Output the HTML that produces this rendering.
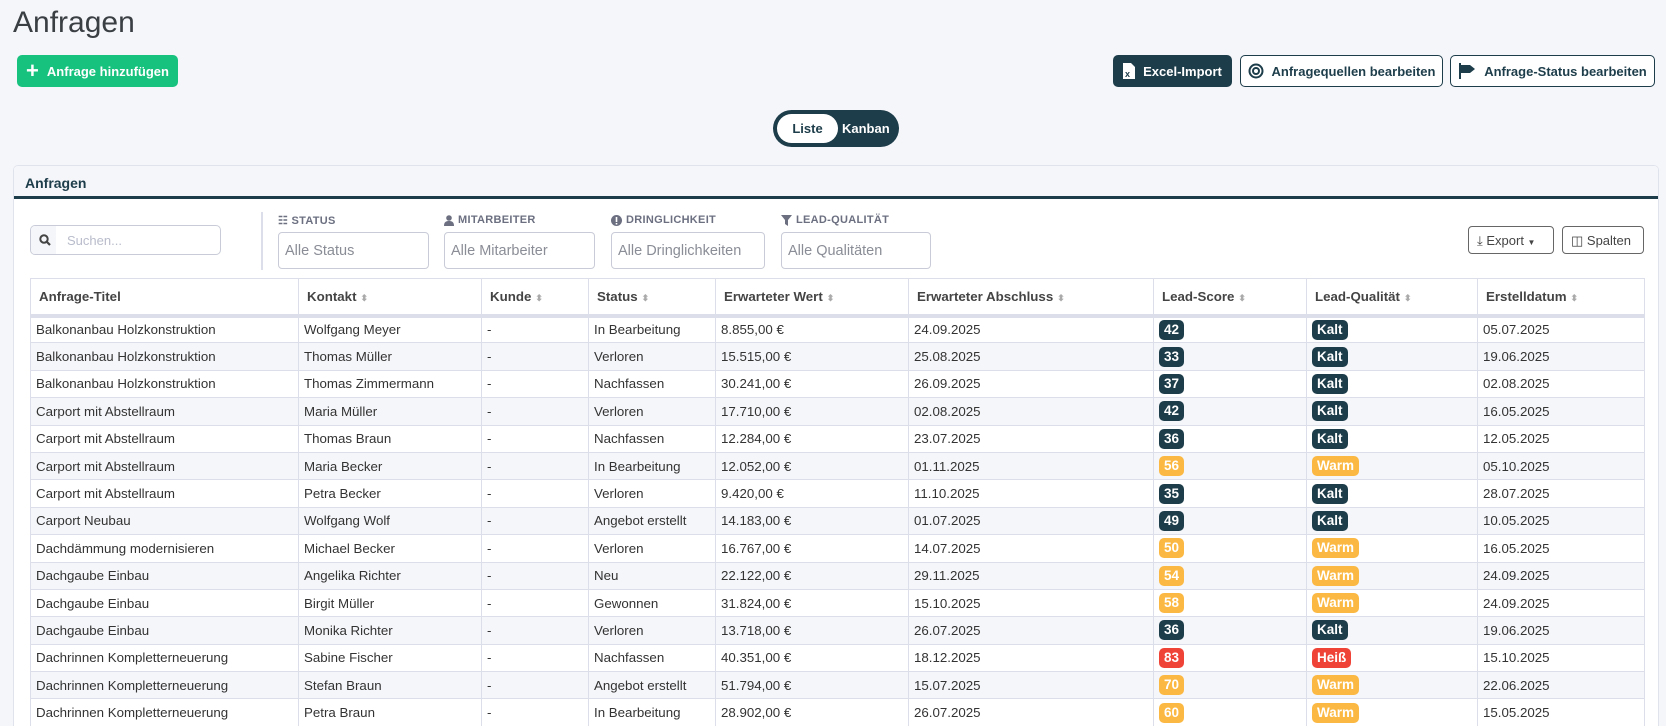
<!DOCTYPE html>
<html style="height:726px;overflow:hidden"><head><meta charset="utf-8"><style>
*{box-sizing:border-box;margin:0;padding:0}
body{width:1666px;height:726px;overflow:hidden;background:#f5f6fa;font-family:"Liberation Sans",sans-serif;color:#333;position:relative}
.abs{position:absolute}
h1{position:absolute;left:13px;top:6px;font-size:30px;font-weight:400;color:#3a3f44}
.btn{position:absolute;display:flex;align-items:center;justify-content:center;gap:8px;font-size:13px;font-weight:bold;border-radius:5px;height:32px;top:55px}
.out{border:1.5px solid #1d3d4a;color:#1d3d4a;background:#fff}
.card{position:absolute;left:13px;top:165px;width:1646px;height:561px;background:#fff;border:1px solid #e1e3ec;border-bottom:none;border-radius:5px 5px 0 0;overflow:hidden}
.chead{height:33px;background:#f5f6fa;border-bottom:3px solid #1d3d4a;padding:9px 11px;font-weight:bold;font-size:14px;color:#1d3d4a}
.lbl{position:absolute;top:214px;font-size:11px;font-weight:bold;color:#6b6f80;letter-spacing:.3px;display:flex;align-items:center;gap:4px}
.inp{position:absolute;top:232px;height:37px;border:1px solid #c9ccd8;border-radius:4px;background:#fff;font-size:14.5px;color:#8a8d96;padding:10px 6px}
.tw{position:absolute;left:30px;top:278px;width:1620px;height:448px;overflow:hidden}
table{border-collapse:collapse;table-layout:fixed;font-size:13.3px}
th{height:37px;text-align:left;padding:0 8px;border:1px solid #dcdeea;border-bottom:4px solid #dcdeea;color:#444;font-size:13.3px;background:#fff}
th .s{color:#aaa;font-size:9px;margin-left:4px}
td{height:27.4px;padding:0 5px;border:1px solid #dcdeea;white-space:nowrap;overflow:hidden;color:#333}
tr:nth-child(odd) td{background:#f5f6fa}
tr:nth-child(even) td{background:#fff}
.b{display:inline-block;color:#fff;font-weight:bold;font-size:13.5px;padding:2px 5px;border-radius:5px;line-height:16px}
.k{background:#1d3d4a}.w{background:#fbb842}.h{background:#ef4338}
</style></head><body>
<h1>Anfragen</h1>
<div class="btn" style="left:17px;width:161px;background:#17c17e;color:#fff"><span style="font-size:22px;font-weight:bold;line-height:1">+</span>Anfrage hinzufügen</div>
<div class="btn" style="left:1113px;width:119px;background:#1d3d4a;color:#fff"><svg width="12" height="16" viewBox="0 0 12 16"><path d="M0 0h8l4 4v12H0z" fill="#fff"/><text x="2" y="14" font-size="9" fill="#1d3d4a" font-family="Liberation Sans">x</text></svg>Excel-Import</div>
<div class="btn out" style="left:1240px;width:203px"><svg width="16" height="16" viewBox="0 0 16 16"><circle cx="8" cy="8" r="6.5" fill="none" stroke="#1d3d4a" stroke-width="2"/><circle cx="8" cy="8" r="3" fill="none" stroke="#1d3d4a" stroke-width="2"/></svg>Anfragequellen bearbeiten</div>
<div class="btn out" style="left:1450px;width:205px"><svg width="18" height="16" viewBox="0 0 18 16"><rect x="1" y="0" width="2" height="16" fill="#1d3d4a"/><path d="M3 2h9l5 4-5 4H3z" fill="#1d3d4a"/></svg>Anfrage-Status bearbeiten</div>
<div class="abs" style="left:773px;top:110px;width:126px;height:37px;background:#1d3d4a;border-radius:19px"></div>
<div class="abs" style="left:777px;top:114px;width:61px;height:29px;background:#fff;border-radius:15px;font-size:13px;font-weight:bold;color:#1d3d4a;text-align:center;line-height:29px">Liste</div>
<div class="abs" style="left:842px;top:114px;font-size:13px;font-weight:bold;color:#fff;line-height:29px">Kanban</div>
<div class="card"><div class="chead">Anfragen</div></div>
<div class="abs" style="left:30px;top:225px;width:191px;height:30px;border:1px solid #c9ccd8;border-radius:5px;background:#fff;overflow:hidden"><div style="position:absolute;left:0;top:0;width:25px;height:28px;background:#f5f6fa"></div><svg class="abs" style="left:8px;top:8px" width="12" height="12" viewBox="0 0 12 12"><circle cx="5" cy="5" r="3.7" fill="none" stroke="#444" stroke-width="2"/><path d="M7.5 7.5l3.5 3.5" stroke="#444" stroke-width="2.2"/></svg><span class="abs" style="left:36px;top:7px;font-size:13px;color:#b9bccb">Suchen...</span></div>
<div class="abs" style="left:261px;top:212px;width:2px;height:58px;background:#dcdeea"></div>
<div class="lbl" style="left:278px">☷ STATUS</div>
<div class="lbl" style="left:444px"><svg width="10" height="11" viewBox="0 0 10 11"><circle cx="5" cy="3" r="2.8" fill="#6b6f80"/><path d="M0 11c0-4 2-5 5-5s5 1 5 5z" fill="#6b6f80"/></svg>MITARBEITER</div>
<div class="lbl" style="left:611px"><svg width="11" height="11"><circle cx="5.5" cy="5.5" r="5.5" fill="#6b6f80"/><rect x="4.7" y="2" width="1.6" height="5" fill="#fff"/><rect x="4.7" y="8" width="1.6" height="1.5" fill="#fff"/></svg>DRINGLICHKEIT</div>
<div class="lbl" style="left:781px"><svg width="11" height="11"><path d="M0 0h11L7 5v6L4 9V5z" fill="#6b6f80"/></svg>LEAD-QUALITÄT</div>
<div class="inp" style="left:278px;width:151px">Alle Status</div>
<div class="inp" style="left:444px;width:151px">Alle Mitarbeiter</div>
<div class="inp" style="left:611px;width:154px">Alle Dringlichkeiten</div>
<div class="inp" style="left:781px;width:150px">Alle Qualitäten</div>
<div class="abs" style="left:1468px;top:226px;width:86px;height:28px;border:1px solid #666;border-radius:4px;background:#fff;font-size:13px;color:#444;padding:6px 8px">⤓ Export <span style="font-size:8px">▼</span></div>
<div class="abs" style="left:1562px;top:226px;width:82px;height:28px;border:1px solid #666;border-radius:4px;background:#fff;font-size:13px;color:#444;padding:6px 8px">◫ Spalten</div>
<div class="tw"><table>
<colgroup><col style="width:268px"><col style="width:183px"><col style="width:107px"><col style="width:127px"><col style="width:193px"><col style="width:245px"><col style="width:153px"><col style="width:171px"><col style="width:167px"></colgroup>
<tr><th>Anfrage-Titel</th><th>Kontakt<span class="s">⬍</span></th><th>Kunde<span class="s">⬍</span></th><th>Status<span class="s">⬍</span></th><th>Erwarteter Wert<span class="s">⬍</span></th><th>Erwarteter Abschluss<span class="s">⬍</span></th><th>Lead-Score<span class="s">⬍</span></th><th>Lead-Qualität<span class="s">⬍</span></th><th>Erstelldatum<span class="s">⬍</span></th></tr>
<tr><td>Balkonanbau Holzkonstruktion</td><td>Wolfgang Meyer</td><td>-</td><td>In Bearbeitung</td><td>8.855,00 €</td><td>24.09.2025</td><td><span class="b k">42</span></td><td><span class="b k">Kalt</span></td><td>05.07.2025</td></tr>
<tr><td>Balkonanbau Holzkonstruktion</td><td>Thomas Müller</td><td>-</td><td>Verloren</td><td>15.515,00 €</td><td>25.08.2025</td><td><span class="b k">33</span></td><td><span class="b k">Kalt</span></td><td>19.06.2025</td></tr>
<tr><td>Balkonanbau Holzkonstruktion</td><td>Thomas Zimmermann</td><td>-</td><td>Nachfassen</td><td>30.241,00 €</td><td>26.09.2025</td><td><span class="b k">37</span></td><td><span class="b k">Kalt</span></td><td>02.08.2025</td></tr>
<tr><td>Carport mit Abstellraum</td><td>Maria Müller</td><td>-</td><td>Verloren</td><td>17.710,00 €</td><td>02.08.2025</td><td><span class="b k">42</span></td><td><span class="b k">Kalt</span></td><td>16.05.2025</td></tr>
<tr><td>Carport mit Abstellraum</td><td>Thomas Braun</td><td>-</td><td>Nachfassen</td><td>12.284,00 €</td><td>23.07.2025</td><td><span class="b k">36</span></td><td><span class="b k">Kalt</span></td><td>12.05.2025</td></tr>
<tr><td>Carport mit Abstellraum</td><td>Maria Becker</td><td>-</td><td>In Bearbeitung</td><td>12.052,00 €</td><td>01.11.2025</td><td><span class="b w">56</span></td><td><span class="b w">Warm</span></td><td>05.10.2025</td></tr>
<tr><td>Carport mit Abstellraum</td><td>Petra Becker</td><td>-</td><td>Verloren</td><td>9.420,00 €</td><td>11.10.2025</td><td><span class="b k">35</span></td><td><span class="b k">Kalt</span></td><td>28.07.2025</td></tr>
<tr><td>Carport Neubau</td><td>Wolfgang Wolf</td><td>-</td><td>Angebot erstellt</td><td>14.183,00 €</td><td>01.07.2025</td><td><span class="b k">49</span></td><td><span class="b k">Kalt</span></td><td>10.05.2025</td></tr>
<tr><td>Dachdämmung modernisieren</td><td>Michael Becker</td><td>-</td><td>Verloren</td><td>16.767,00 €</td><td>14.07.2025</td><td><span class="b w">50</span></td><td><span class="b w">Warm</span></td><td>16.05.2025</td></tr>
<tr><td>Dachgaube Einbau</td><td>Angelika Richter</td><td>-</td><td>Neu</td><td>22.122,00 €</td><td>29.11.2025</td><td><span class="b w">54</span></td><td><span class="b w">Warm</span></td><td>24.09.2025</td></tr>
<tr><td>Dachgaube Einbau</td><td>Birgit Müller</td><td>-</td><td>Gewonnen</td><td>31.824,00 €</td><td>15.10.2025</td><td><span class="b w">58</span></td><td><span class="b w">Warm</span></td><td>24.09.2025</td></tr>
<tr><td>Dachgaube Einbau</td><td>Monika Richter</td><td>-</td><td>Verloren</td><td>13.718,00 €</td><td>26.07.2025</td><td><span class="b k">36</span></td><td><span class="b k">Kalt</span></td><td>19.06.2025</td></tr>
<tr><td>Dachrinnen Kompletterneuerung</td><td>Sabine Fischer</td><td>-</td><td>Nachfassen</td><td>40.351,00 €</td><td>18.12.2025</td><td><span class="b h">83</span></td><td><span class="b h">Heiß</span></td><td>15.10.2025</td></tr>
<tr><td>Dachrinnen Kompletterneuerung</td><td>Stefan Braun</td><td>-</td><td>Angebot erstellt</td><td>51.794,00 €</td><td>15.07.2025</td><td><span class="b w">70</span></td><td><span class="b w">Warm</span></td><td>22.06.2025</td></tr>
<tr><td>Dachrinnen Kompletterneuerung</td><td>Petra Braun</td><td>-</td><td>In Bearbeitung</td><td>28.902,00 €</td><td>26.07.2025</td><td><span class="b w">60</span></td><td><span class="b w">Warm</span></td><td>15.05.2025</td></tr>
<tr><td>Dachsanierung Altbau</td><td>Klaus Weber</td><td>-</td><td>Neu</td><td>24.310,00 €</td><td>12.09.2025</td><td><span class="b k">41</span></td><td><span class="b k">Kalt</span></td><td>03.06.2025</td></tr>
</table></div>
</body></html>
